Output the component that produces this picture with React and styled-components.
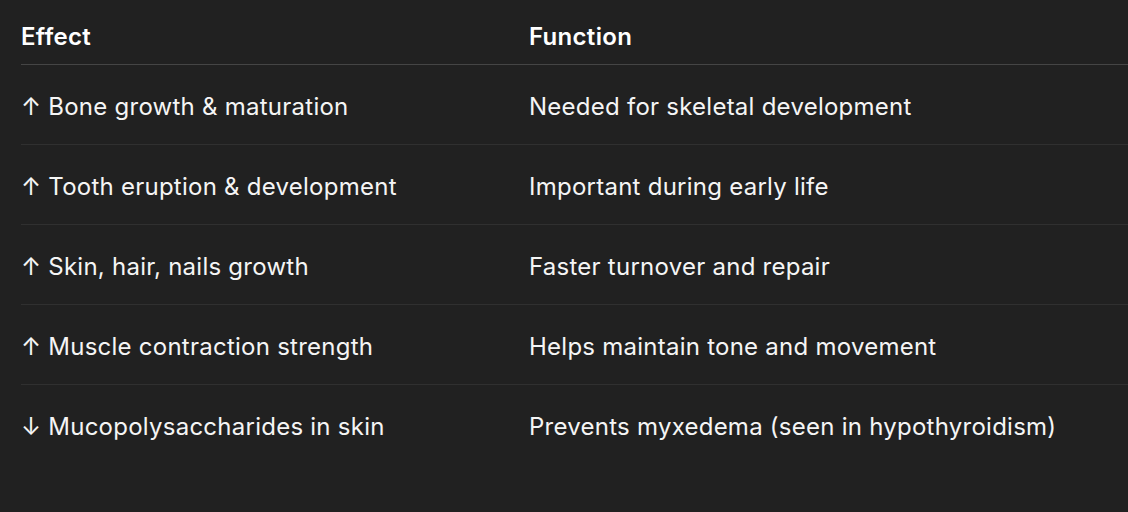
import React from 'react'
import styled, { createGlobalStyle } from 'styled-components';

const GlobalStyle = createGlobalStyle`
html, body {
  margin: 0;
  padding: 0;
  background: #212121;
  overflow: hidden;
}
body {
  font-family: Inter, "Noto Sans", "Liberation Sans", sans-serif;
  color: #ececec;
  -webkit-font-smoothing: antialiased;
}
`

const Page = styled.div`
width: 1128px;
height: 512px;
background: #212121;
padding-left: 21px;
box-sizing: border-box;
overflow: hidden;
`

const Table = styled.div`
width: 1200px;
display: grid;
grid-template-columns: 508px 1fr;
`

const HeadCell = styled.div`
height: 65px;
padding-top: 8px;
box-sizing: border-box;
display: flex;
align-items: center;
font-size: 24px;
font-weight: 600;
letter-spacing: 0.3px;
color: #fff;
border-bottom: 1px solid #454545;
`

const Cell = styled.div`
height: 80px;
padding-top: 3px;
box-sizing: border-box;
display: flex;
align-items: center;
font-size: 24px;
font-weight: 400;
letter-spacing: 0.25px;
color: #f5f5f5;
border-bottom: ${p => (p.last ? 'none' : '1px solid #303030')};
`

const rows = [
  ['↑ Bone growth & maturation', 'Needed for skeletal development'],
  ['↑ Tooth eruption & development', 'Important during early life'],
  ['↑ Skin, hair, nails growth', 'Faster turnover and repair'],
  ['↑ Muscle contraction strength', 'Helps maintain tone and movement'],
  ['↓ Mucopolysaccharides in skin', 'Prevents myxedema (seen in hypothyroidism)'],
]

const App = () => {
  return (
    <Page>
      <GlobalStyle />
      <Table>
        <HeadCell>Effect</HeadCell>
        <HeadCell>Function</HeadCell>
        {rows.map((r, i) => (
          <React.Fragment key={i}>
            <Cell last={i === rows.length - 1}>{r[0]}</Cell>
            <Cell last={i === rows.length - 1}>{r[1]}</Cell>
          </React.Fragment>
        ))}
      </Table>
    </Page>
  )
}

export default App
